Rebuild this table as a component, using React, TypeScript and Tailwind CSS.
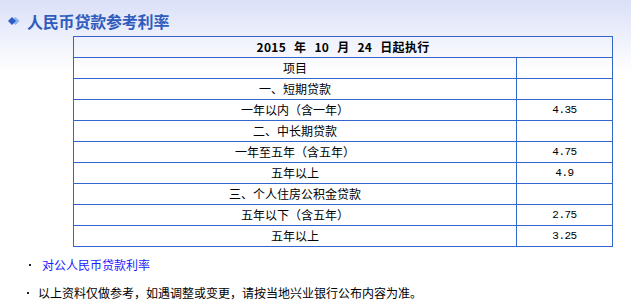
const rows: { label: string; rate: string }[] = [
  { label: "项目", rate: "" },
  { label: "一、短期贷款", rate: "" },
  { label: "一年以内（含一年）", rate: "4.35" },
  { label: "二、中长期贷款", rate: "" },
  { label: "一年至五年（含五年）", rate: "4.75" },
  { label: "五年以上", rate: "4.9" },
  { label: "三、个人住房公积金贷款", rate: "" },
  { label: "五年以下（含五年）", rate: "2.75" },
  { label: "五年以上", rate: "3.25" },
];

export default function App() {
  return (
    <div className="w-[631px] h-[303px] overflow-hidden bg-[linear-gradient(to_bottom,#dbe0f8_0px,#ffffff_72px)] font-['Noto_Sans_CJK_SC',sans-serif] text-[12px] text-black">
      <div className="flex items-center h-[36px] pt-[6px] pl-[8px]">
        <svg width="14" height="10" viewBox="0 0 14 10" className="shrink-0">
          <polygon points="7.5,1 11.5,5 7.5,9 3.5,5" fill="#8ab4ee" />
          <polygon points="4,1 8,5 4,9 0,5" fill="#2f5cc4" />
        </svg>
        <h1 className="ml-[5px] text-[16px] leading-none font-bold text-[#2f5cbd] tracking-[-0.2px]">
          人民币贷款参考利率
        </h1>
      </div>

      <div className="ml-[73px] w-[540px] border border-[#3366cc]">
        <div className="h-[20px] flex items-center justify-center font-bold leading-none [word-spacing:5px] tracking-[0.3px]">
          2015 年 10 月 24 日起执行
        </div>
        {rows.map((row, i) => (
          <div key={i} className="flex h-[21px] border-t border-[#3366cc] leading-none">
            <div className="w-[443px] flex items-center justify-center border-r border-[#3366cc]">
              {row.label}
            </div>
            <div className="flex-1 flex items-center justify-center font-['Liberation_Mono',monospace] text-[11px] tracking-[-0.5px]">
              {row.rate}
            </div>
          </div>
        ))}
      </div>

      <div className="mt-[8px] h-[20px] flex items-center pl-[29px]">
        <span className="w-[2px] h-[2px] bg-[#222]" />
        <a href="#" className="ml-[11px] text-[#1a1aff] leading-none">
          对公人民币贷款利率
        </a>
      </div>
      <div className="mt-[8px] h-[20px] flex items-center pl-[27px]">
        <span className="w-[2px] h-[2px] bg-[#222]" />
        <span className="ml-[9px] leading-none">
          以上资料仅做参考，如遇调整或变更，请按当地兴业银行公布内容为准。
        </span>
      </div>
    </div>
  );
}
